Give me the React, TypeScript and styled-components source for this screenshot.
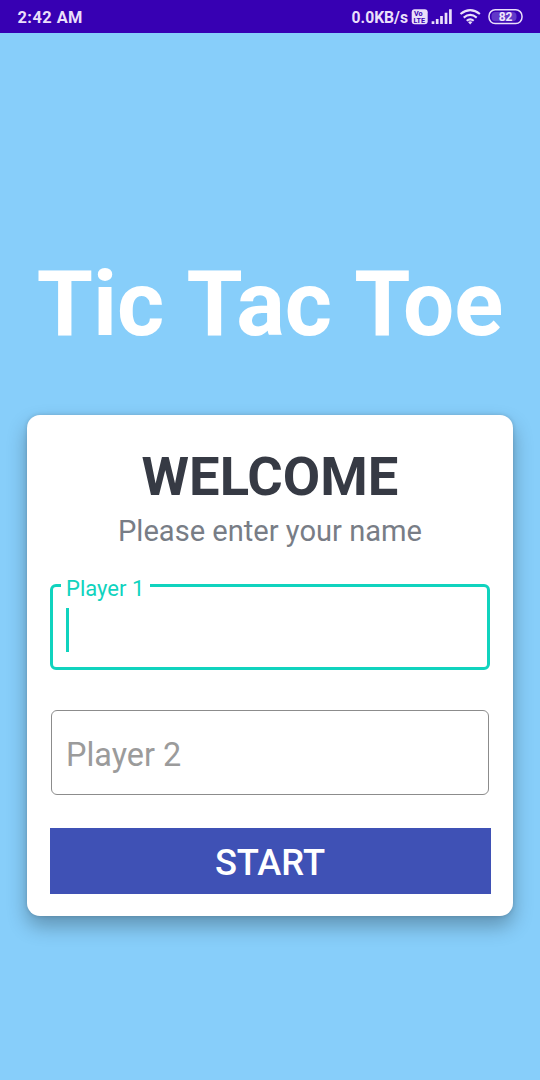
import React from 'react';
import styled, { createGlobalStyle } from 'styled-components';

const Global = createGlobalStyle`
  * { box-sizing: border-box; }
  body { margin: 0; font-family: Roboto, sans-serif; background: #87cefa; }
`;
const Screen = styled.main`
  height: 1080px; overflow: hidden; background: #87cefa;
  display: flex; flex-direction: column;
`;
const StatusBar = styled.header`
  height: 33px; background: #3700b3; color: #eadffa;
  display: flex; justify-content: space-between; align-items: center;
  padding: 1px 17px 0 17.5px; font-size: 15.7px; font-weight: 700; line-height: 19px;
`;
const Clock = styled.time`font-size: 16.4px; letter-spacing: .45px;`;
const StatusItems = styled.div`display: flex; align-items: center;`;
const StatusIcons = styled.svg`display: block; margin: -1px 0 0 2px;`;
const Title = styled.h1`
  margin: 215px 0 0; height: 112px; line-height: 113px; font-size: 90.8px; font-weight: 700;
  word-spacing: 2px; color: #fff; text-align: center; white-space: nowrap;
`;
const Card = styled.section`
  width: 486px; height: 501px; margin: 55px 0 0 27px; padding: 34px 22.5px 22px;
  background: #fff; border-radius: 13px;
  box-shadow: 0 10px 20px rgba(0,0,0,.29), 0 0 4px rgba(0,0,0,.15);
  display: flex; flex-direction: column;
`;
const Welcome = styled.h2`
  margin: 0; font-size: 54.3px; font-weight: 700; line-height: 56px; text-align: center; color: #363a44;
`;
const Prompt = styled.p`
  margin: 8px 0 0; font-size: 29.1px; line-height: 36px; text-align: center; color: #787d86;
`;
const FirstField = styled.fieldset`
  width: 440px; height: 95px; margin: 26px 0 0 .5px; padding: 13px 13px 0;
  border: 3px solid #10d3be; border-radius: 6px;
`;
const Legend = styled.legend`
  height: 20px; margin-left: -5.5px; padding: 4px 6px 0 5.5px;
  font-size: 22px; line-height: 20px; color: #10d3be;
`;
const Caret = styled.div`width: 3px; height: 44px; background: #10d3be;`;
const SecondField = styled.div`
  width: 438px; height: 85px; margin: 40px 0 0 1.5px; padding: 4px 14px 0;
  border: 1.5px solid #8c8c8c; border-radius: 6px;
  display: flex; align-items: center; color: #9b9b9b; font-size: 32.4px;
`;
const Start = styled.button`
  height: 66px; margin-top: 33px; border: 0; background: #3f51b5; color: #fff;
  font: 500 36.3px/66px Roboto, sans-serif; padding: 2px 0 0;
`;
const VolteText = styled.text`font: 700 7.2px Roboto, sans-serif; fill: #3700b3;`;
const BatteryText = styled.text`font: 700 12px Roboto, sans-serif; fill: #f0e8fc;`;

function SystemIcons() {
  return <StatusIcons width="113" height="18" viewBox="410 8 113 18" fill="none">
    <rect x="411.7" y="9.3" width="16" height="15" rx="3" fill="#eadffa"/>
    <VolteText><tspan x="414" y="16.2">Vo</tspan><tspan x="413.5" y="23.1">LTE</tspan></VolteText>
    <path d="M433 21.3V24M437.2 19V24M441.5 16V24M446 12.8V24M450.4 9.3V24" stroke="#eadffa" strokeWidth="2.7"/>
    <path d="M460.5 14Q470.2 6.2 479.9 14M463.7 17.6Q470.2 12.2 476.7 17.6M466.7 20.8Q470.2 17.8 473.7 20.8" stroke="#eadffa" strokeWidth="2.1"/>
    <path d="M468 22Q470.2 20.7 472.4 22L470.2 24.4Z" fill="#eadffa"/>
    <rect x="489" y="9.8" width="33" height="13.7" rx="6.2" stroke="#eadffa" strokeWidth="1.5"/>
    <rect x="491.5" y="12" width="25" height="9.3" rx="4" fill="#6238c8"/>
    <BatteryText x="498.7" y="20.9">82</BatteryText>
  </StatusIcons>;
}

export default function App() {
  return <><Global /><Screen>
    <StatusBar><Clock>2:42 AM</Clock><StatusItems><span>0.0KB/s</span><SystemIcons /></StatusItems></StatusBar>
    <Title>Tic Tac Toe</Title>
    <Card><Welcome>WELCOME</Welcome><Prompt>Please enter your name</Prompt>
      <FirstField><Legend>Player 1</Legend><Caret /></FirstField>
      <SecondField>Player 2</SecondField>
      <Start>START</Start>
    </Card>
  </Screen></>;
}
